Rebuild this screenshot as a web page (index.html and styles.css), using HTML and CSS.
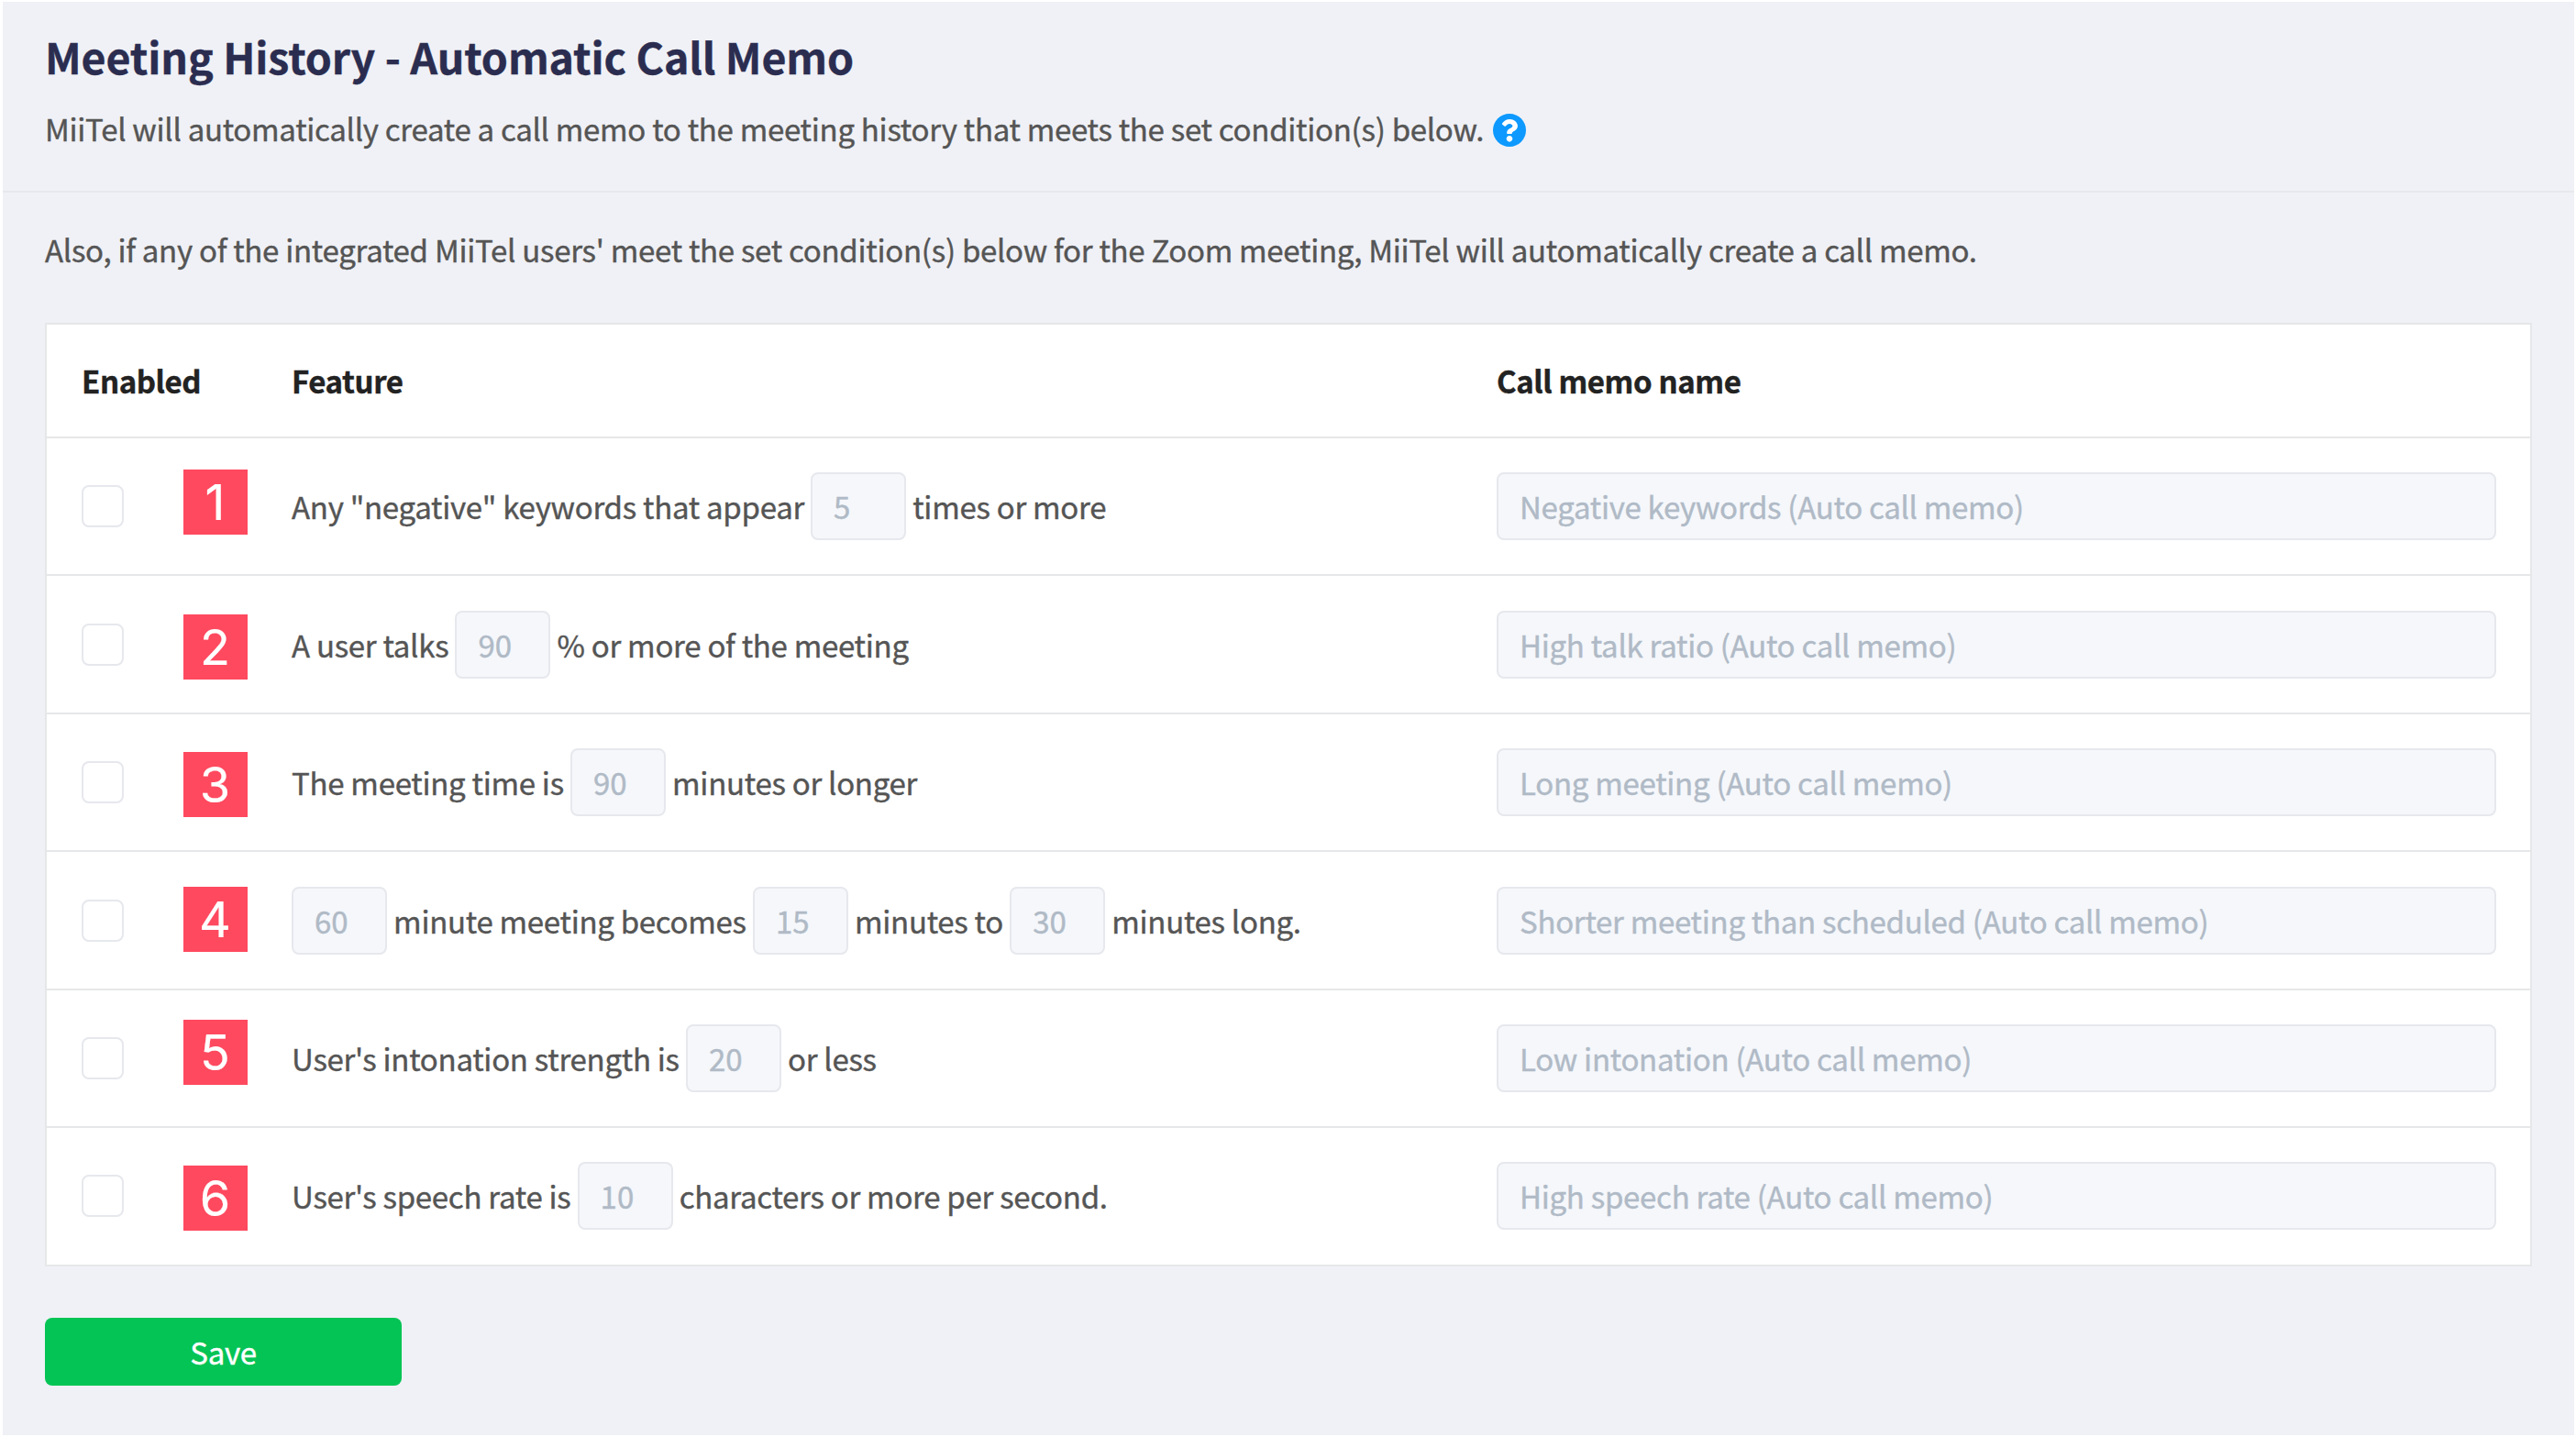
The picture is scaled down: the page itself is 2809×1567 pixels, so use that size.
FILE: index.html
```html
<!DOCTYPE html>
<html lang="en">
<head>
  <meta charset="UTF-8" />
  <meta name="viewport" content="width=device-width, initial-scale=1.0"/>
  <title>Meeting History - Automatic Call Memo</title>
  <link rel="stylesheet" href="styles.css">
</head>
<body>

  <main class="page">
    <header class="page-header">
      <h1>Meeting History - Automatic Call Memo</h1>
      <p class="lead">
        <span>MiiTel will automatically create a call memo to the meeting history that meets the set condition(s) below.</span>
        <svg class="help" viewBox="8 8 496 496" aria-hidden="true">
          <path fill="#0d99ff" d="M504 256c0 137-111 248-248 248S8 393 8 256 119 8 256 8s248 111 248 248z"/>
          <path fill="#fff" d="M262.700 90c-54.500 0-89.300 23-116.500 63.800-3.500 5.300-2.400 12.400 2.700 16.300l34.700 26.300c5.200 3.900 12.600 3 16.700-2.100 17.900-22.700 30.100-35.800 57.300-35.800 20.400 0 45.700 13.100 45.700 33 0 15-12.400 22.700-32.500 34C247.100 238.500 216 254.900 216 296v4c0 6.600 5.400 12 12 12h56c6.600 0 12-5.400 12-12v-1.300c0-28.500 83.200-29.600 83.200-106.700 0-58-60.200-102-116.500-102zM256 338c-25.400 0-46 20.600-46 46s20.600 46 46 46 46-20.600 46-46-20.600-46-46-46z"/>
        </svg>
      </p>
    </header>

    <section class="content">
      <p class="note">Also, if any of the integrated MiiTel users' meet the set condition(s) below for the Zoom meeting, MiiTel will automatically create a call memo.</p>

      <div class="table">
        <div class="row head">
          <div>Enabled</div>
          <div>Feature</div>
          <div>Call memo name</div>
        </div>
        <div class="row">
          <div><span class="checkbox"></span></div>
          <div>Any "negative" keywords that appear <input class="num" value="5" disabled> times or more</div>
          <div><input class="memo" value="Negative keywords (Auto call memo)" disabled></div>
          <span class="badge badge-1">1</span>
        </div>
        <div class="row">
          <div><span class="checkbox"></span></div>
          <div>A user talks <input class="num" value="90" disabled> % or more of the meeting</div>
          <div><input class="memo" value="High talk ratio (Auto call memo)" disabled></div>
          <span class="badge badge-2">2</span>
        </div>
        <div class="row">
          <div><span class="checkbox"></span></div>
          <div>The meeting time is <input class="num" value="90" disabled> minutes or longer</div>
          <div><input class="memo" value="Long meeting (Auto call memo)" disabled></div>
          <span class="badge badge-3">3</span>
        </div>
        <div class="row">
          <div><span class="checkbox"></span></div>
          <div><input class="num" value="60" disabled> minute meeting becomes <input class="num" value="15" disabled> minutes to <input class="num" value="30" disabled> minutes long.</div>
          <div><input class="memo" value="Shorter meeting than scheduled (Auto call memo)" disabled></div>
          <span class="badge badge-4">4</span>
        </div>
        <div class="row">
          <div><span class="checkbox"></span></div>
          <div>User's intonation strength is <input class="num" value="20" disabled> or less</div>
          <div><input class="memo" value="Low intonation (Auto call memo)" disabled></div>
          <span class="badge badge-5">5</span>
        </div>
        <div class="row">
          <div><span class="checkbox"></span></div>
          <div>User's speech rate is <input class="num" value="10" disabled> characters or more per second.</div>
          <div><input class="memo" value="High speech rate (Auto call memo)" disabled></div>
          <span class="badge badge-6">6</span>
        </div>
      </div>

      <button class="save">Save</button>
    </section>
  </main>

</body>
</html>
```
FILE: styles.css
```css
* { margin: 0; padding: 0; box-sizing: border-box; }
html, body {
  height: 100%;
  background: #fff;
}
body {
  font-family: "Noto Sans CJK JP", "Noto Sans", sans-serif;
  font-size: 33px;
  line-height: 50px;
  letter-spacing: -0.28px;
  -webkit-text-stroke: 0.4px;
  color: #555;
  padding: 2px 2px 2px 3px;
  overflow: hidden;
}

.page {
  height: 100%;
  background: #f0f1f6;
}

/* Header */
.page-header {
  height: 208px;
  padding: 25px 46px 0;
  border-bottom: 2px solid #e6e8ec;
}
.page-header h1 {
  font-size: 46.5px;
  line-height: 68px;
  letter-spacing: -0.1px;
  color: #2b2d50;
}
.lead {
  display: flex;
  align-items: center;
  gap: 10px;
  margin-top: 20px;
}
.help {
  width: 36px;
  height: 36px;
  margin-top: 3px;
}

.content {
  padding: 37px 46px 0;
}

/* Conditions table */
.table {
  margin-top: 55px;
  border: 2px solid #e6e7e8;
  background: #fff;
}
.row {
  position: relative;
  display: grid;
  grid-template-columns: 229px 1314px 1090px;
  align-items: center;
  height: 150.45px;
  padding-left: 38px;
  border-bottom: 2px solid #e6e7e8;
}
.row:last-child {
  border-bottom: none;
  height: 148.45px;
}
.head {
  height: 124px;
  font-weight: bold;
  letter-spacing: -0.4px;
  color: #222;
}
.checkbox {
  display: block;
  width: 46px;
  height: 46px;
  border: 2px solid #e6e8ed;
  border-radius: 8px;
}
input {
  height: 74px;
  padding: 0 23px;
  font: inherit;
  letter-spacing: inherit;
  color: #b0bac6;
  background: #f5f7fb;
  border: 2px solid #e6e8ed;
  border-radius: 8px;
}
.num {
  width: 104px;
  letter-spacing: 0;
}
.memo {
  display: block;
  width: 100%;
}

/* Number markers laid over the rows */
.badge {
  position: absolute;
  left: 149px;
  width: 70px;
  height: 71px;
  padding-right: 1px;
  font-family: Inter, sans-serif;
  font-size: 54px;
  line-height: 71px;
  letter-spacing: 0;
  text-align: center;
  -webkit-text-stroke: 0.2px;
  color: #fff;
  background: #ff495f;
}
.badge-1 { top: 34px; }
.badge-2 { top: 42px; }
.badge-3 { top: 41px; }
.badge-4 { top: 38px; }
.badge-5 { top: 32px; }
.badge-6 { top: 41px; }

.save {
  display: block;
  width: 389px;
  height: 74px;
  margin-top: 56px;
  font: inherit;
  letter-spacing: inherit;
  color: #fff;
  background: #04c455;
  border: none;
  border-radius: 8px;
}
```
